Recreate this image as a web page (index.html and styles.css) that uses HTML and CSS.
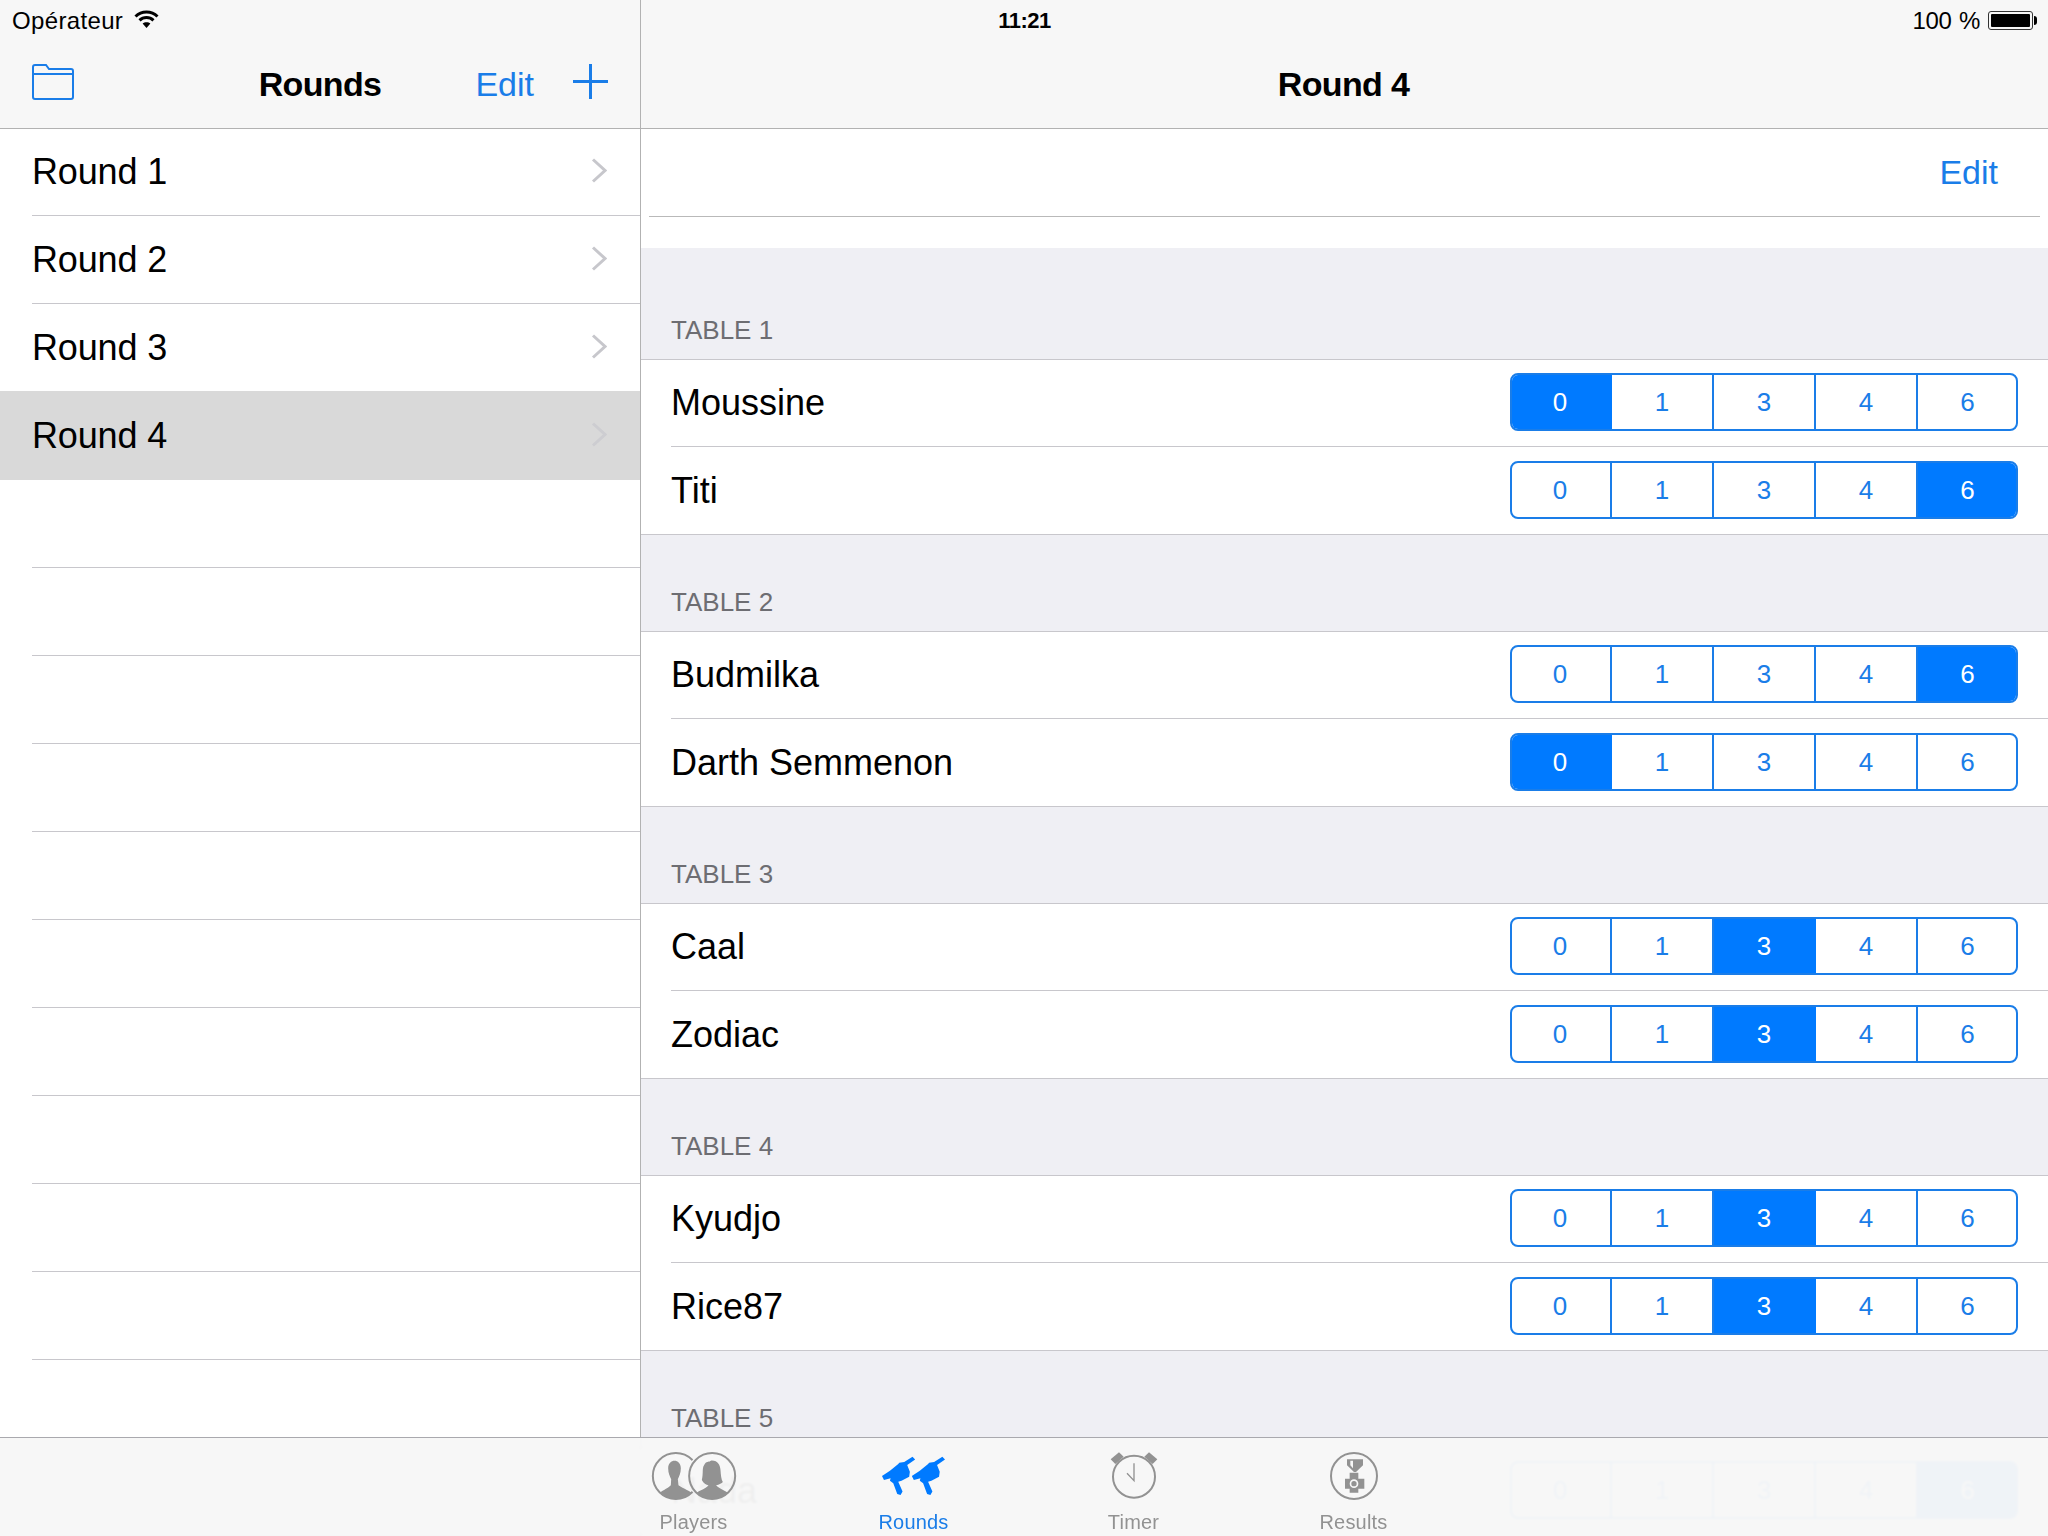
FILE: index.html
```html
<!DOCTYPE html>
<html lang="fr">
<head>
<meta charset="utf-8">
<title>Rounds</title>
<link rel="stylesheet" href="styles.css">
</head>
<body>
<div class="app">
  <div class="statusbar">
    <div class="status-left"><span class="carrier">Opérateur</span>
      <svg class="wifi" viewBox="0 0 25 18"><path d="M1.5 6.5C7.5 .6 17.5 .6 23.5 6.5" class="wifi-arc"/><path d="M5.5 10.3C9.5 6.6 15.5 6.6 19.5 10.3" class="wifi-arc"/><path d="M12.5 18L8.6 13.6C10.6 11.8 14.4 11.8 16.4 13.6Z" class="wifi-tip"/></svg>
    </div>
    <div class="status-time">11:21</div>
    <div class="status-right"><span class="pct">100 %</span>
      <span class="battery"><span class="battery-fill"></span></span><span class="battery-nub"></span>
    </div>
  </div>

  <aside class="sidebar">
    <header class="nav side-nav">
      <div class="nav-left">
        <svg class="folder" viewBox="0 0 42 36"><path d="M1 33V3a2 2 0 0 1 2-2h11l3 4h22a2 2 0 0 1 2 2v26a2 2 0 0 1-2 2H3a2 2 0 0 1-2-2ZM1 10H41" /></svg>
      </div>
      <h1 class="nav-title">Rounds</h1>
      <div class="nav-right">
        <span class="link">Edit</span>
        <svg class="plus" viewBox="0 0 35 35"><path d="M17.5 0V35M0 17.5H35"/></svg>
      </div>
    </header>
    <ul class="round-list">
      <li class="round">Round 1<svg class="chev" viewBox="0 0 16 25"><path d="M2 1.5L14 12.5L2 23.5"/></svg></li>
      <li class="round">Round 2<svg class="chev" viewBox="0 0 16 25"><path d="M2 1.5L14 12.5L2 23.5"/></svg></li>
      <li class="round">Round 3<svg class="chev" viewBox="0 0 16 25"><path d="M2 1.5L14 12.5L2 23.5"/></svg></li>
      <li class="round selected">Round 4<svg class="chev" viewBox="0 0 16 25"><path d="M2 1.5L14 12.5L2 23.5"/></svg></li>
      <li class="round"></li><li class="round"></li><li class="round"></li><li class="round"></li>
      <li class="round"></li><li class="round"></li><li class="round"></li><li class="round"></li>
      <li class="round"></li><li class="round"></li><li class="round"></li><li class="round"></li>
    </ul>
  </aside>

  <main class="detail">
    <header class="nav detail-nav"><h1 class="nav-title">Round 4</h1></header>
    <div class="detail-top">
      <div class="edit-row"><span class="link">Edit</span></div>
    </div>

    <section class="table first">
      <h2 class="table-head">TABLE 1</h2>
      <div class="row"><span class="name">Moussine</span><div class="seg"><span class="on">0</span><span>1</span><span>3</span><span>4</span><span>6</span></div></div>
      <div class="row"><span class="name">Titi</span><div class="seg"><span>0</span><span>1</span><span>3</span><span>4</span><span class="on">6</span></div></div>
    </section>
    <section class="table">
      <h2 class="table-head">TABLE 2</h2>
      <div class="row"><span class="name">Budmilka</span><div class="seg"><span>0</span><span>1</span><span>3</span><span>4</span><span class="on">6</span></div></div>
      <div class="row"><span class="name">Darth Semmenon</span><div class="seg"><span class="on">0</span><span>1</span><span>3</span><span>4</span><span>6</span></div></div>
    </section>
    <section class="table">
      <h2 class="table-head">TABLE 3</h2>
      <div class="row"><span class="name">Caal</span><div class="seg"><span>0</span><span>1</span><span class="on">3</span><span>4</span><span>6</span></div></div>
      <div class="row"><span class="name">Zodiac</span><div class="seg"><span>0</span><span>1</span><span class="on">3</span><span>4</span><span>6</span></div></div>
    </section>
    <section class="table">
      <h2 class="table-head">TABLE 4</h2>
      <div class="row"><span class="name">Kyudjo</span><div class="seg"><span>0</span><span>1</span><span class="on">3</span><span>4</span><span>6</span></div></div>
      <div class="row"><span class="name">Rice87</span><div class="seg"><span>0</span><span>1</span><span class="on">3</span><span>4</span><span>6</span></div></div>
    </section>
    <section class="table">
      <h2 class="table-head">TABLE 5</h2>
      <div class="row"><span class="name">Nada</span><div class="seg"><span>0</span><span>1</span><span>3</span><span>4</span><span class="on">6</span></div></div>
    </section>
  </main>

  <nav class="tabbar">
    <div class="tab">
      <svg class="tab-icon players" viewBox="30 36 260 144">
        <defs>
          <clipPath id="c1"><circle cx="107" cy="108" r="68"/></clipPath>
          <clipPath id="c2"><circle cx="216" cy="108" r="68"/></clipPath>
          <mask id="gap" maskUnits="userSpaceOnUse" x="30" y="36" width="260" height="144">
            <rect x="30" y="36" width="260" height="144" fill="#fff"/>
            <circle cx="216" cy="108" r="76" fill="#000"/>
          </mask>
        </defs>
        <g mask="url(#gap)">
          <circle cx="107" cy="108" r="69" class="ring"/>
          <g clip-path="url(#c1)" class="solid">
            <path d="M84 85C84 55 122 55 122 85C122 100 117 110 113 118L115 136C130 148 150 150 165 170V190H50V170C62 150 82 148 92 136L93 118C89 110 84 100 84 85Z"/>
          </g>
        </g>
        <circle cx="216" cy="108" r="69" class="ring"/>
        <g clip-path="url(#c2)" class="solid">
          <path d="M185 120C190 100 185 85 192 75C198 62 205 68 212 62C232 60 240 75 241 90C242 105 243 118 248 126C240 134 232 134 228 136C238 150 265 150 275 175V190H160V170C170 150 195 150 205 136C198 134 190 130 185 120Z"/>
        </g>
      </svg>
      <span class="tab-label">Players</span>
    </div>
    <div class="tab active">
      <svg class="tab-icon guns" viewBox="60 36 205 144">
        <path d="M66 108L90 92L115 72L118 68L133 66L158 50L166 58L142 75L150 95L148 110L125 122L115 125L128 155L122 165L112 162L100 130L90 122L92 115L72 120Z"/>
        <path d="M66 108L90 92L115 72L118 68L133 66L158 50L166 58L142 75L150 95L148 110L125 122L115 125L128 155L122 165L112 162L100 130L90 122L92 115L72 120Z" transform="translate(90 0)"/>
      </svg>
      <span class="tab-label">Rounds</span>
    </div>
    <div class="tab">
      <svg class="tab-icon timer" viewBox="58 36 150 144">
        <circle cx="133" cy="110" r="63" class="ring"/>
        <path d="M133 70V122L112 100" class="hand"/>
        <path d="M63 58L88 37L102 50L77 72Z" class="solid"/>
        <path d="M203 58L178 37L164 50L189 72Z" class="solid"/>
      </svg>
      <span class="tab-label">Timer</span>
    </div>
    <div class="tab">
      <svg class="tab-icon results" viewBox="56 36 150 144">
        <circle cx="131" cy="108" r="69" class="ring"/>
        <path class="solid medal" fill-rule="evenodd" d="M110 58H158V76L137 96H131L110 76ZM120 62V76L128 85V62ZM118 98H144V116H162V146H144V158H118V146H104V116H118ZM131 118A13 13 0 1 0 131.1 144A13 13 0 1 0 131 118ZM131 123A8 8 0 1 1 130.9 139A8 8 0 1 1 131 123Z"/>
      </svg>
      <span class="tab-label">Results</span>
    </div>
  </nav>
</div>
</body>
</html>
```

FILE: styles.css
```css
* { box-sizing: border-box; margin: 0; padding: 0; }
html, body { width: 2048px; height: 1536px; overflow: hidden; background: #fff; }
body { font-family: "Liberation Sans", Arial, sans-serif; color: #000; }

.app { position: relative; display: flex; width: 2048px; height: 1536px; overflow: hidden; }

/* Status bar overlays the navigation bars */
.statusbar {
  position: absolute; top: 0; left: 0; z-index: 3;
  display: grid; grid-template-columns: 1fr auto 1fr; align-items: center;
  width: 100%; height: 40px; padding: 1px 11px 0 12px;
  font-size: 24px; color: #000;
}
.status-left { display: flex; align-items: center; gap: 11px; }
.carrier { letter-spacing: .35px; }
.wifi { width: 25px; height: 18px; margin-top: -3px; }
.wifi-arc { fill: none; stroke: #000; stroke-width: 3; }
.wifi-tip { fill: #000; }
.status-time { font-weight: 700; font-size: 22px; letter-spacing: -.5px; }
.status-right { display: flex; align-items: center; justify-content: flex-end; }
.pct { margin-right: 8px; word-spacing: 1px; letter-spacing: -.3px; }
.battery { display: block; width: 45px; height: 19px; margin-top: -1px; padding: 2px; border: 1px solid #333; border-radius: 3px; }
.battery-fill { display: block; width: 100%; height: 100%; background: #000; border-radius: 1px; }
.battery-nub { display: block; width: 3px; height: 9px; margin-left: 1px; margin-top: -1px; background: #000; border-radius: 0 3px 3px 0; }

/* Navigation bars */
.nav {
  position: relative; z-index: 2;
  height: 128px; padding-top: 40px;
  background: #f7f7f7; box-shadow: 0 1px 0 #b2b2b2;
}
.nav-title { font-size: 34px; font-weight: 700; line-height: 88px; text-align: center; letter-spacing: -.65px; }
.detail-nav .nav-title { margin-left: -2px; }
.side-nav { display: grid; grid-template-columns: 1fr auto 1fr; align-items: start; padding-left: 32px; padding-right: 32px; }
.nav-left { padding-top: 24px; }
.folder { display: block; width: 42px; height: 36px; fill: none; stroke: #1a7de8; stroke-width: 2; }
.nav-right { display: flex; justify-content: flex-end; gap: 39px; }
.link { color: #1a7de8; font-size: 34px; line-height: 88px; }
.plus { width: 35px; height: 35px; margin-top: 24px; fill: none; stroke: #1a7de8; stroke-width: 3; }

/* Rounds list */
.sidebar { flex: none; width: 641px; height: 100%; border-right: 1px solid #b2b2b2; background: #fff; }
.round-list { list-style: none; }
.round {
  display: flex; align-items: center; justify-content: space-between;
  height: 88px; padding: 0 33px 0 32px; font-size: 36px; position: relative;
  letter-spacing: -.15px;
}
.round::after { content: ""; position: absolute; left: 32px; right: 0; bottom: 0; height: 1px; background: #c8c7cc; }
.round.selected { background: #d9d9d9; box-shadow: 0 -1px 0 #d9d9d9; }
.round.selected::after { display: none; }
.chev { width: 16px; height: 25px; margin-bottom: 4px; fill: none; stroke: #c7c7cc; stroke-width: 3; }
.selected .chev { stroke: #cdcdd1; }

/* Detail */
.detail { flex: 1; min-width: 0; height: 100%; background: #efeff4; }
.detail-top { height: 120px; background: #fff; }
.edit-row {
  display: flex; justify-content: flex-end; align-items: center;
  height: 89px; margin: 0 8px; padding: 0 42px 1px 0;
  border-bottom: 1px solid #b9b9b9;
}
.table-head {
  height: 96px; padding: 0 0 14px 30px;
  display: flex; align-items: flex-end;
  font-size: 26px; font-weight: 400; line-height: 30px; color: #6d6d72;
}
.first .table-head { height: 111px; }
.row {
  display: flex; align-items: center; justify-content: space-between;
  height: 88px; padding: 0 30px 2px 30px; background: #fff; position: relative;
}
.row::after { content: ""; position: absolute; left: 30px; right: 0; bottom: 0; height: 1px; background: #c8c7cc; }
.row:last-child::after { left: 0; }
.row:nth-child(2) { box-shadow: inset 0 1px 0 #c8c7cc; }
.name { font-size: 36px; margin-top: 1px; }

.seg {
  display: flex; flex: none; width: 508px; height: 58px;
  border: 2px solid #1a7de8; border-radius: 8px; overflow: hidden;
  font-size: 26px; color: #1a7de8;
}
.seg span { flex: none; width: 102px; display: flex; align-items: center; justify-content: center; border-right: 2px solid #1a7de8; }
.seg span:first-child { width: 100px; padding-right: 2px; }
.seg span:last-child { width: 98px; padding-left: 1px; border-right: 0; }
.seg .on { background: #007aff; color: #fff; border-right-color: #007aff; }

/* Tab bar floats above the scrolling content */
.tabbar {
  position: absolute; left: 0; bottom: 0; z-index: 2;
  display: flex; justify-content: center;
  width: 100%; height: 99px; padding-top: 14px;
  background: rgba(247,247,247,.968); border-top: 1px solid #a9a9ae;
  backdrop-filter: blur(1px);
}
.tab { display: flex; flex-direction: column; align-items: center; width: 220px; color: #929292; }
.tab.active { color: #1a7de8; }
.tab-icon { display: block; height: 48px; }
.players { width: 87px; margin-left: -2px; }
.guns { width: 68px; fill: #007aff; }
.timer, .results { width: 50px; }
.tab-label { font-size: 20px; line-height: 24px; margin-top: 10px; margin-left: -1px; letter-spacing: .2px; }
.ring { fill: none; stroke: #929292; stroke-width: 6; }
.solid { fill: #929292; }
.hand { fill: none; stroke: #929292; stroke-width: 4; }
```
